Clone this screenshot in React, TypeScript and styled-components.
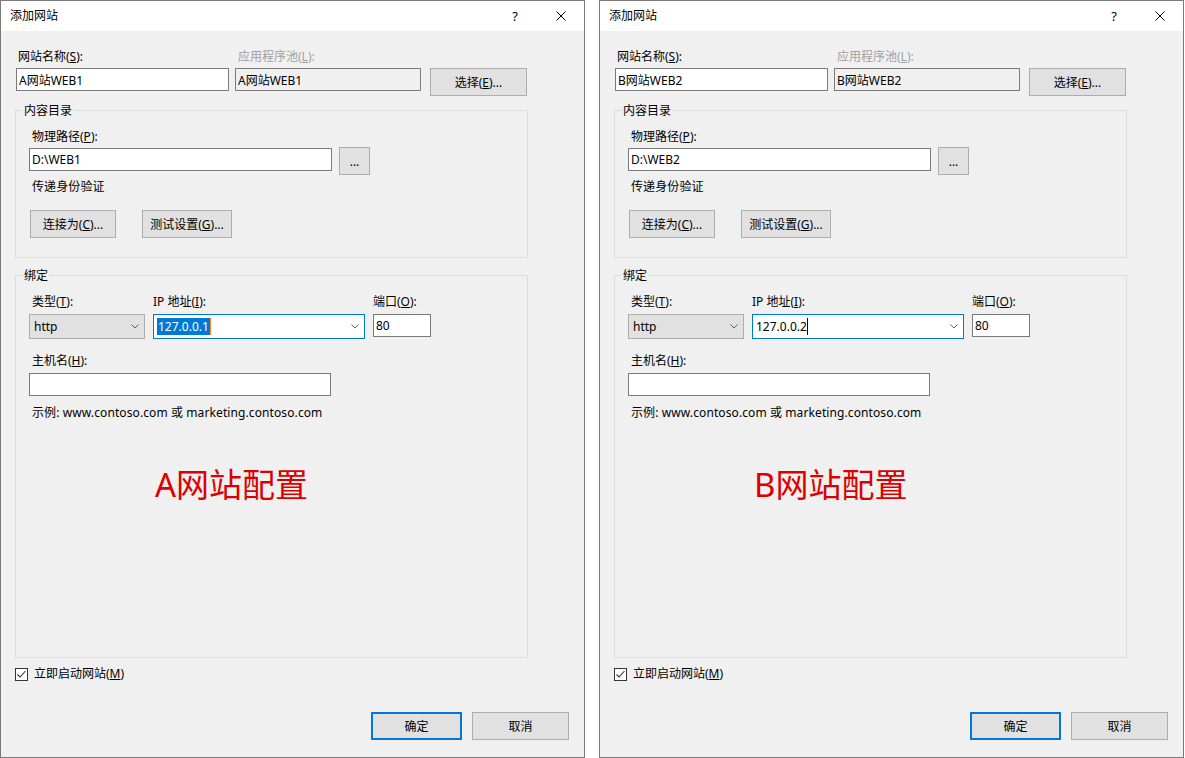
import React from 'react';
import styled, { createGlobalStyle } from 'styled-components';

const GlobalStyle = createGlobalStyle`
  html, body {
    margin: 0;
    padding: 0;
    background: #ffffff;
  }
  body {
    font-family: "Noto Sans", "Noto Sans CJK SC", sans-serif;
    font-size: 12px;
    color: #000000;
  }
`;

interface SiteConfig {
  letter: string;
  num: number;
  ipSelected: boolean;
}

const sites: SiteConfig[] = [
  { letter: 'A', num: 1, ipSelected: true },
  { letter: 'B', num: 2, ipSelected: false },
];

const Page = styled.div`
  display: flex;
  gap: 14px;
  width: 1185px;
  height: 758px;
`;

const Dialog = styled.div`
  width: 585px;
  height: 758px;
  box-sizing: border-box;
  border: 1px solid #7a7a7a;
  background: #f0f0f0;
  display: flex;
  flex-direction: column;
`;

const TitleBar = styled.div`
  height: 30px;
  flex-shrink: 0;
  background: #ffffff;
  display: flex;
  align-items: center;
  padding-left: 9px;
`;

const Title = styled.div`
  flex: 1;
  line-height: 16px;
`;

const TitleButton = styled.div`
  width: 46px;
  height: 30px;
  display: flex;
  align-items: center;
  justify-content: center;
  font-size: 13px;
`;

const Body = styled.div`
  flex: 1;
  display: flex;
  flex-direction: column;
  padding: 17px 15px 17px 14px;
  min-height: 0;
`;

const TopRow = styled.div`
  display: grid;
  grid-template-columns: 213px 186px 97px;
  column-gap: 6px;
  row-gap: 4px;
  padding-left: 1px;
`;

const Label = styled.div<{ $indent?: number; $disabled?: boolean }>`
  line-height: 16px;
  padding-top: 1px;
  margin-bottom: -1px;
  padding-left: ${(p) => p.$indent ?? 3}px;
  color: ${(p) => (p.$disabled ? '#a0a0a0' : '#000000')};
  white-space: nowrap;
`;

const Field = styled.div<{ $w: number; $readOnly?: boolean }>`
  box-sizing: border-box;
  width: ${(p) => p.$w}px;
  height: 23px;
  border: 1px solid #7a7a7a;
  background: ${(p) => (p.$readOnly ? '#f0f0f0' : '#ffffff')};
  display: flex;
  align-items: center;
  padding: 0 2px;
  white-space: nowrap;
`;

const Button = styled.div<{ $w: number; $default?: boolean }>`
  box-sizing: border-box;
  width: ${(p) => p.$w}px;
  height: 28px;
  border: ${(p) => (p.$default ? '2px solid #0078d7' : '1px solid #adadad')};
  background: #e1e1e1;
  display: flex;
  align-items: center;
  justify-content: center;
  white-space: nowrap;
`;

const Group = styled.fieldset<{ $top: number; $grow?: boolean }>`
  width: 513px;
  box-sizing: border-box;
  margin: ${(p) => p.$top}px 0 0;
  padding: 0;
  border: 1px solid #dcdcdc;
  min-width: 0;
  flex: ${(p) => (p.$grow ? 1 : 'none')};
`;

const Legend = styled.legend`
  margin-left: 7px;
  padding: 1px 1px 0;
  line-height: 16px;
`;

const GroupBody = styled.div`
  padding: 9px 0 19px 13px;
  display: flex;
  flex-direction: column;
  align-items: flex-start;
`;

const PathRow = styled.div`
  display: flex;
  align-items: flex-start;
  gap: 7px;
  margin-top: 3px;

  & > ${Field} {
    margin-top: 1px;
  }
`;

const Note = styled.div<{ $top: number }>`
  line-height: 16px;
  margin-top: ${(p) => p.$top}px;
  padding-left: 3px;
  letter-spacing: 0.1px;
  white-space: nowrap;
`;

const ButtonRow = styled.div`
  display: flex;
  gap: 26px;
  margin-top: 15px;
  padding-left: 1px;
`;

const BindGrid = styled.div`
  display: grid;
  grid-template-columns: 116px 212px 58px;
  column-gap: 8px;
  row-gap: 5px;
  align-items: start;
`;

const Combo = styled.div<{ $w: number; $focused?: boolean; $flat?: boolean }>`
  box-sizing: border-box;
  width: ${(p) => p.$w}px;
  height: 25px;
  border: 1px solid ${(p) => (p.$focused ? '#0078d7' : '#adadad')};
  background: ${(p) => (p.$flat ? '#e1e1e1' : '#ffffff')};
  display: flex;
  align-items: center;
  justify-content: space-between;
  padding: 0 5px 0 2px;
`;

const ComboText = styled.div<{ $pad?: number }>`
  display: flex;
  align-items: center;
  padding-left: ${(p) => p.$pad ?? 1}px;
`;

const Selected = styled.span`
  background: #0078d7;
  color: #ffffff;
  line-height: 17px;
  padding: 0 1px;
`;

const Caret = styled.span<{ $color: string }>`
  display: inline-block;
  width: 1px;
  height: 17px;
  background: ${(p) => p.$color};
`;

const HostBlock = styled.div`
  display: flex;
  flex-direction: column;
  gap: 5px;
  margin-top: 13px;
`;

const BigCaption = styled.div`
  margin: 44px 0 0 126px;
  font-size: 33px;
  line-height: 40px;
  color: #dc0000;
  white-space: nowrap;
`;

const CheckRow = styled.div`
  display: flex;
  align-items: center;
  gap: 6px;
  margin-top: 8px;
  line-height: 16px;
`;

const CheckBox = styled.div`
  width: 13px;
  height: 13px;
  box-sizing: border-box;
  border: 1px solid #333333;
  background: #ffffff;
  display: flex;
  align-items: center;
  justify-content: center;
`;

const Footer = styled.div`
  display: flex;
  justify-content: flex-end;
  gap: 10px;
  margin-top: 30px;
`;

const Chevron = () => (
  <svg width="8" height="5" viewBox="0 0 8 5">
    <polyline points="0.5,0.5 4,4 7.5,0.5" fill="none" stroke="#606060" strokeWidth="1" />
  </svg>
);

const CloseIcon = () => (
  <svg width="10" height="10" viewBox="0 0 10 10">
    <line x1="0.5" y1="0.5" x2="9.5" y2="9.5" stroke="#000" strokeWidth="1" />
    <line x1="9.5" y1="0.5" x2="0.5" y2="9.5" stroke="#000" strokeWidth="1" />
  </svg>
);

const CheckIcon = () => (
  <svg width="11" height="11" viewBox="0 0 11 11">
    <polyline points="1.5,5.5 4,8 9.5,2" fill="none" stroke="#333333" strokeWidth="1.1" />
  </svg>
);

const SiteDialog: React.FC<{ site: SiteConfig }> = ({ site }) => {
  const name = `${site.letter}网站WEB${site.num}`;
  const ip = `127.0.0.${site.num}`;

  return (
    <Dialog>
      <TitleBar>
        <Title>添加网站</Title>
        <TitleButton>?</TitleButton>
        <TitleButton>
          <CloseIcon />
        </TitleButton>
      </TitleBar>
      <Body>
        <TopRow>
          <Label $indent={2}>网站名称(<u>S</u>):</Label>
          <Label $indent={3} $disabled>应用程序池(<u>L</u>):</Label>
          <div />
          <Field $w={213}>{name}</Field>
          <Field $w={186} $readOnly>{name}</Field>
          <Button $w={97} style={{ marginLeft: 3 }}>选择(<u>E</u>)...</Button>
        </TopRow>

        <Group $top={6}>
          <Legend>内容目录</Legend>
          <GroupBody>
            <Label>物理路径(<u>P</u>):</Label>
            <PathRow>
              <Field $w={303}>D:\WEB{site.num}</Field>
              <Button $w={31}>...</Button>
            </PathRow>
            <Note $top={4}>传递身份验证</Note>
            <ButtonRow>
              <Button $w={86}>连接为(<u>C</u>)...</Button>
              <Button $w={90}>测试设置(<u>G</u>)...</Button>
            </ButtonRow>
          </GroupBody>
        </Group>

        <Group $top={9} $grow>
          <Legend>绑定</Legend>
          <GroupBody>
            <BindGrid>
              <Label>类型(<u>T</u>):</Label>
              <Label $indent={0}>IP 地址(<u>I</u>):</Label>
              <Label $indent={0}>端口(<u>O</u>):</Label>
              <Combo $w={116} $flat>
                <ComboText $pad={2}>http</ComboText>
                <Chevron />
              </Combo>
              <Combo $w={212} $focused>
                <ComboText>
                  {site.ipSelected ? (
                    <>
                      <Selected>{ip}</Selected>
                      <Caret $color="#ff8728" />
                    </>
                  ) : (
                    <>
                      {ip}
                      <Caret $color="#000000" />
                    </>
                  )}
                </ComboText>
                <Chevron />
              </Combo>
              <Field $w={58}>80</Field>
            </BindGrid>
            <HostBlock>
              <Label>主机名(<u>H</u>):</Label>
              <Field $w={302} />
            </HostBlock>
            <Note $top={9}>示例: www.contoso.com 或 marketing.contoso.com</Note>
            <BigCaption>{site.letter}网站配置</BigCaption>
          </GroupBody>
        </Group>

        <CheckRow>
          <CheckBox>
            <CheckIcon />
          </CheckBox>
          <span>立即启动网站(<u>M</u>)</span>
        </CheckRow>

        <Footer>
          <Button $w={91} $default>确定</Button>
          <Button $w={97}>取消</Button>
        </Footer>
      </Body>
    </Dialog>
  );
};

export default function App() {
  return (
    <>
      <GlobalStyle />
      <Page>
        {sites.map((s) => (
          <SiteDialog key={s.letter} site={s} />
        ))}
      </Page>
    </>
  );
}
